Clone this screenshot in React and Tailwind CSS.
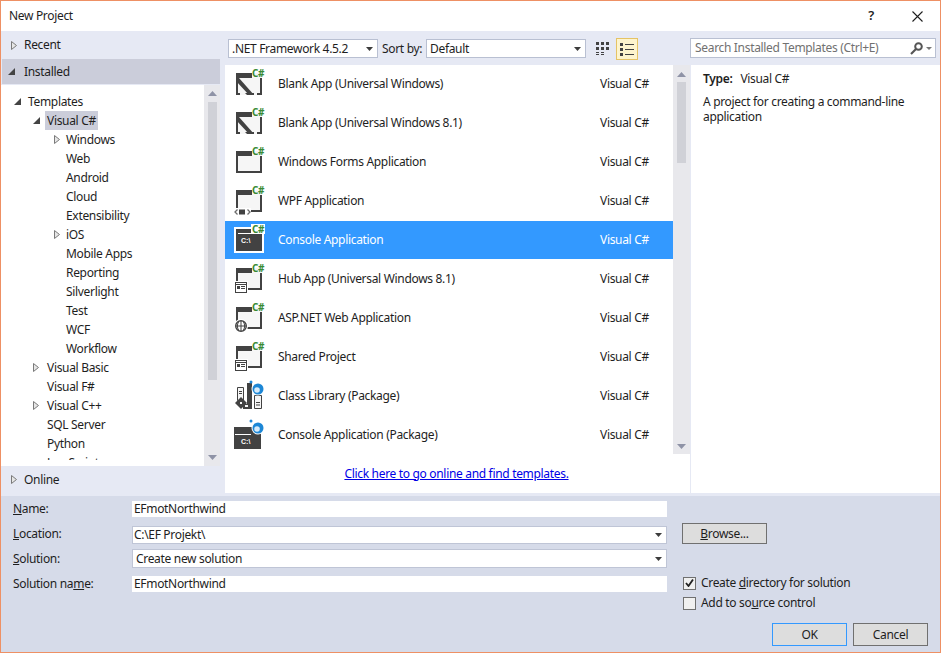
import React from 'react';

const D = '#424242';
const Win = () => (
  <>
    <rect x="2" y="5" width="26" height="22" fill="#f6f6f6" />
    <path d="M2 5h16v5H4v15H2z M2 25h26v2H2z M26 10h2v17h-2z" fill={D} />
  </>
);
const CS = ({ bg }) => (
  <>
    {bg && <rect x="17" y="0" width="14" height="10" fill={bg} />}
    <text x="18" y="9" fontSize="10" fontWeight="700" letterSpacing="-0.5" fontFamily="'Noto Sans', sans-serif" fill="#388a34">C#</text>
  </>
);
const Card = () => (
  <>
    <rect x="0" y="18" width="14" height="12" fill="#fff" />
    <rect x="1.500" y="19.500" width="11" height="10" fill="none" stroke={D} />
    <path d="M2 21.500h10" stroke={D} />
    <path d="M3 23h3v3H3z" fill={D} />
    <path d="M7 23.500h4M7 25.500h4" stroke={D} />
  </>
);
const Pack = () => (
  <>
    <circle cx="24" cy="9" r="6.500" fill="#fff" />
    <circle cx="24" cy="9" r="5.500" fill="#1d87d6" />
    <circle cx="23" cy="10" r="2.800" fill="#d6ebfb" />
    <circle cx="17" cy="2" r="1.500" fill="#1d87d6" />
  </>
);

function TemplateIcon({ kind }) {
  return (
    <svg width="32" height="32" viewBox="0 0 32 32" className="shrink-0 block self-start mt-[3px] overflow-visible">
      {kind === 'blank' && (
        <>
          <Win />
          <path d="M2 10h3l15 17h-5L2 13z" fill={D} />
          <path d="M6 25h5l2 2H6zM20 25h3v2h-3z" fill="#f6f6f6" />
          <CS />
        </>
      )}
      {kind === 'win' && (<><Win /><CS /></>)}
      {kind === 'wpf' && (
        <>
          <Win />
          <rect x="0" y="23" width="17" height="8" fill="#fff" />
          <path d="M3.500 24.500L1 27l2.500 2.500M13.500 24.500L16 27l-2.500 2.500" fill="none" stroke="#6d6d6d" strokeWidth="1.300" />
          <rect x="5" y="24.500" width="6" height="5" fill={D} />
          <CS />
        </>
      )}
      {kind === 'console' && (
        <>
          <rect x="0" y="3" width="30" height="26" fill="#fff" />
          <rect x="2" y="5" width="26" height="22" fill={D} />
          <path d="M4 9.500h14" stroke="#fff" />
          <text x="7" y="19" fontSize="7" letterSpacing="0" fontFamily="'Liberation Sans', sans-serif" fontWeight="700" fill="#fff">C:\</text>
          <CS bg="#fff" />
        </>
      )}
      {kind === 'hub' && (<><Win /><Card /><CS /></>)}
      {kind === 'asp' && (
        <>
          <Win />
          <circle cx="7" cy="24" r="7" fill="#fff" />
          <circle cx="7" cy="24" r="5.300" fill="none" stroke={D} strokeWidth="1.400" />
          <path d="M2 24h10M7 19v10M4.500 20c-1.500 2.500-1.500 5.500 0 8M9.500 20c1.500 2.500 1.500 5.500 0 8" fill="none" stroke={D} />
          <CS />
        </>
      )}
      {kind === 'lib' && (
        <>
          <path d="M3.500 7.500h6v13h-6z" fill="#f6f6f6" stroke={D} />
          <path d="M5 11.500h3M5 13.500h3" stroke={D} />
          <path d="M13 3h5v26h-5z" fill={D} />
          <path d="M20.500 15.500h7v13h-7z" fill="#f6f6f6" stroke={D} />
          <path d="M22 22.500h4M22 25h4" stroke={D} />
          <path d="M7 17l6 6-6 6-6-6z" fill={D} />
          <path d="M9 24h7v5H9z" fill={D} />
          <path d="M6 22h2v2H6zM11 25h3v2h-3z" fill="#f6f6f6" />
          <Pack />
        </>
      )}
      {kind === 'pconsole' && (
        <>
          <rect x="0" y="8" width="27" height="22" fill={D} />
          <path d="M1 15.500h16" stroke="#fff" />
          <text x="7" y="25" fontSize="7" letterSpacing="0" fontFamily="'Liberation Sans', sans-serif" fontWeight="700" fill="#fff">C:\</text>
          <Pack />
        </>
      )}
    </svg>
  );
}

const Collapsed = () => (
  <svg width="6" height="9" viewBox="0 0 6 9" className="block shrink-0">
    <path d="M.5.500v8L5.500 4.500z" fill="#e6e6e6" stroke="#7a7a7a" />
  </svg>
);
const Expanded = () => (
  <svg width="7" height="7" viewBox="0 0 7 7" className="block shrink-0">
    <path d="M7 0v7H0z" fill="#444" />
  </svg>
);
const Caret = () => (
  <svg width="7" height="4" viewBox="0 0 7 4" className="block shrink-0">
    <path d="M0 0h7L3.500 4z" fill="#3c3c3c" />
  </svg>
);
const ScrollArrow = ({ up }) => (
  <svg width="9" height="5" viewBox="0 0 9 5" className="block shrink-0">
    <path d={up ? 'M0 5h9L4.500 0z' : 'M0 0h9L4.500 5z'} fill="#8f93a6" />
  </svg>
);

const tree = [
  ['Templates', 'l0', 'e'],
  ['Visual C#', 'l1', 'e', true],
  ['Windows', 'l2', 'c'],
  ['Web', 'l2'],
  ['Android', 'l2'],
  ['Cloud', 'l2'],
  ['Extensibility', 'l2'],
  ['iOS', 'l2', 'c'],
  ['Mobile Apps', 'l2'],
  ['Reporting', 'l2'],
  ['Silverlight', 'l2'],
  ['Test', 'l2'],
  ['WCF', 'l2'],
  ['Workflow', 'l2'],
  ['Visual Basic', 'l1', 'c'],
  ['Visual F#', 'l1'],
  ['Visual C++', 'l1', 'c'],
  ['SQL Server', 'l1'],
  ['Python', 'l1'],
  ['JavaScript', 'l1'],
];

const templates = [
  ['Blank App (Universal Windows)', 'blank'],
  ['Blank App (Universal Windows 8.1)', 'blank'],
  ['Windows Forms Application', 'win'],
  ['WPF Application', 'wpf'],
  ['Console Application', 'console', true],
  ['Hub App (Universal Windows 8.1)', 'hub'],
  ['ASP.NET Web Application', 'asp'],
  ['Shared Project', 'hub'],
  ['Class Library (Package)', 'lib'],
  ['Console Application (Package)', 'pconsole'],
];

function TreeRow({ label, level, arrow, selected }) {
  const arrowPos = level === 'l0' ? 'w-[25px] pl-[13px]' : level === 'l1' ? 'w-[44px] pl-[32px]' : 'w-[63px] pl-[53px]';
  return (
    <div className="h-[19px] flex items-center">
      <div className={arrowPos + ' shrink-0 flex items-center'}>
        {arrow === 'e' && <Expanded />}
        {arrow === 'c' && <Collapsed />}
      </div>
      <span className={(selected ? 'bg-[#cbcdda] ' : '') + 'h-[19px] leading-[19px] px-[2px]'}>{label}</span>
    </div>
  );
}

const Select = ({ w, h = 'h-[19px]', label, border = 'border-[#b9c0d2]', pl = 'pl-[3px]' }) => (
  <div className={`${w} ${h} border ${border} ${pl} bg-white flex items-center justify-between pr-[4px] shrink-0`}>
    <span>{label}</span>
    <Caret />
  </div>
);

export default function App() {
  return (
    <div className="w-[941px] h-[653px] border border-[#ee9064] bg-white flex flex-col overflow-hidden text-[12px] text-[#1e1e1e] tracking-[-0.32px]" style={{ fontFamily: "'Noto Sans', sans-serif" }}>
      {/* title */}
      <div className="h-[30px] shrink-0 flex items-center justify-between pl-[8px] pr-[17px]">
        <span>New Project</span>
        <div className="flex items-center gap-[38px]">
          <span className="text-[13px] font-semibold">?</span>
          <svg width="11" height="11" viewBox="0 0 11 11"><path d="M.5.500l10 10M10.500.500l-10 10" stroke="#1e1e1e" strokeWidth="1.100" /></svg>
        </div>
      </div>

      {/* main */}
      <div className="h-[462px] shrink-0 bg-[#e6e9f4] flex">
        <div className="w-[219px] shrink-0 flex flex-col">
          <div className="h-[28px] flex items-center shrink-0 pl-[10px] gap-[9px]"><Collapsed /><span className="ml-[-2px]">Recent</span></div>
          <div className="h-[25px] flex items-center shrink-0 bg-[#cbcdda] pl-[6px] gap-[9px] ml-[1px]"><Expanded /><span>Installed</span></div>
          <div className="h-[381px] shrink-0 mt-[1px] bg-white flex overflow-hidden">
            <div className="flex-1 pt-[7px]">
              <div className="h-[368px] overflow-hidden">
                {tree.map((t) => <TreeRow key={t[0]} label={t[0]} level={t[1]} arrow={t[2]} selected={t[3]} />)}
              </div>
            </div>
            <div className="w-[16px] shrink-0 bg-[#e8e8ec] flex flex-col items-center pb-[6px] pt-[6px]">
              <ScrollArrow up />
              <div className="w-full flex-1 mt-[6px]"><div className="h-[278px] w-[9px] mx-auto bg-[#d0d1d7]" /></div>
              <ScrollArrow />
            </div>
          </div>
          <div className="flex-1 flex items-center pl-[10px] gap-[9px]"><Collapsed /><span className="ml-[-2px]">Online</span></div>
        </div>

        <div className="w-[465px] shrink-0 ml-[5px] flex flex-col">
          <div className="h-[34px] shrink-0 flex items-center pt-[1px]">
            <div className="ml-[3px] flex items-center">
              <Select w="w-[150px]" label=".NET Framework 4.5.2" />
              <span className="ml-[4px] w-[44px]">Sort by:</span>
              <Select w="w-[160px]" label="Default" />
              <svg width="14" height="14" viewBox="0 0 14 14" className="ml-[10px] shrink-0">
                <path d="M0 0h3v3H0zM5 0h3v3H5zM10 0h3v3h-3zM0 5h3v3H0zM5 5h3v3H5zM10 5h3v3h-3zM0 10h3v1H0zM0 12h3v1H0zM5 10h3v1H5zM5 12h3v1H5z" fill="#424242" />
              </svg>
              <div className="ml-[6px] w-[22px] h-[22px] shrink-0 bg-[#fdf4cd] border border-[#e5c365] flex items-center justify-center">
                <svg width="14" height="14" viewBox="0 0 14 14">
                  <path d="M0 1h3v3H0zM0 6h3v3H0zM0 11h3v3H0z" fill="#424242" />
                  <path d="M5 2.500h9M5 7.500h9M5 12.500h9" stroke="#424242" />
                </svg>
              </div>
            </div>
          </div>
          <div className="flex-1 bg-white flex flex-col min-h-0">
            <div className="h-[389px] shrink-0 flex overflow-hidden">
              <div className="flex-1">
                {templates.map(([name, kind, sel]) => (
                  <div key={name} className={(sel ? 'bg-[#3399ff] text-white border-white ' : 'border-transparent ') + 'h-[39px] border-b flex items-center pl-[9px]'}>
                    <TemplateIcon kind={kind} />
                    <span className="ml-[12px] w-[322px] shrink-0 pb-[1px]">{name}</span>
                    <span className="pb-[1px]">Visual C#</span>
                  </div>
                ))}
              </div>
              <div className="w-[17px] shrink-0 bg-[#e8e8ec] flex flex-col items-center pt-[7px] pb-[5px]">
                <ScrollArrow up />
                <div className="flex-1 w-full mt-[5px]"><div className="h-[81px] w-[9px] mx-auto bg-[#d0d1d7]" /></div>
                <ScrollArrow />
              </div>
            </div>
            <div className="flex-1 flex items-center justify-center pr-[2px]">
              <span className="text-[#0000e6] underline">Click here to go online and find templates.</span>
            </div>
          </div>
        </div>

        <div className="flex-1 min-w-0 flex flex-col ml-[1px]">
          <div className="h-[34px] shrink-0 pr-[4px] pt-[7px] ml-[-1px]">
            <div className="h-[20px] bg-white border border-[#b9c0d2] flex items-center justify-between pl-[4px] pr-[3px] text-[#717171]">
              <span>Search Installed Templates (Ctrl+E)</span>
              <div className="flex items-center gap-[3px]">
                <svg width="13" height="13" viewBox="0 0 13 13"><circle cx="8.500" cy="4.500" r="3.300" fill="none" stroke="#555" strokeWidth="2" /><path d="M6 7l-5 5" stroke="#555" strokeWidth="2.200" /></svg>
                <svg width="6" height="3" viewBox="0 0 6 3"><path d="M0 0h6L3 3z" fill="#777" /></svg>
              </div>
            </div>
          </div>
          <div className="flex-1 bg-white pl-[12px] pt-[5px]">
            <div className="h-[18px] leading-[18px]"><span className="font-semibold">Type:</span><span className="ml-[8px]">Visual C#</span></div>
            <div className="mt-[6px] leading-[15px] w-[220px]">A project for creating a command-line application</div>
          </div>
        </div>
      </div>

      {/* form */}
      <div className="flex-1 bg-[#d6dbe9] border-t-[3px] border-[#e6e9f4] flex flex-col pl-[12px]">
        <div className="flex pt-[5px]">
          <div className="w-[119px] shrink-0 flex flex-col">
            <div className="h-[25px] leading-[16px]"><u>N</u>ame:</div>
            <div className="h-[25px] leading-[16px]"><u>L</u>ocation:</div>
            <div className="h-[25px] leading-[16px]"><u>S</u>olution:</div>
            <div className="h-[25px] leading-[16px]">Solution na<u>m</u>e:</div>
          </div>
          <div className="w-[535px] shrink-0 flex flex-col">
            <div className="h-[25px]"><div className="h-[16px] bg-white pl-[2px] leading-[16px]">EFmotNorthwind</div></div>
            <div className="h-[25px]"><Select w="w-full" h="h-[18px]" pl="pl-[1px]" label="C:\EF Projekt\" border="border-[#bfc5d6]" /></div>
            <div className="h-[25px]"><div className="mt-[-2px]"><Select w="w-full" h="h-[19px]" label="Create new solution" border="border-[#bfc5d6]" /></div></div>
            <div className="h-[25px]"><div className="h-[16px] bg-white pl-[2px] leading-[16px]">EFmotNorthwind</div></div>
          </div>
          <div className="ml-[15px] flex flex-col">
            <div className="h-[22px]" />
            <div className="w-[85px] h-[21px] bg-[#dddddd] border border-[#707070] flex items-center justify-center leading-none"><span><u>B</u>rowse...</span></div>
            <div className="h-[29px]" />
            <div className="h-[20px] pl-[1px] flex items-center gap-[5px]">
              <span className="w-[13px] h-[13px] bg-[#f0f0f0] border border-[#707070] flex items-center justify-center">
                <svg width="9" height="8" viewBox="0 0 9 8"><path d="M1 4l2.500 3L8 .5" fill="none" stroke="#222" strokeWidth="1.800" /></svg>
              </span>
              <span>Create <u>d</u>irectory for solution</span>
            </div>
            <div className="h-[20px] pl-[1px] flex items-center gap-[5px]">
              <span className="w-[13px] h-[13px] bg-[#f0f0f0] border border-[#707070]" />
              <span>Add to so<u>u</u>rce control</span>
            </div>
          </div>
        </div>
        <div className="flex justify-end gap-[6px] pr-[12px] mt-[10px]">
          <div className="w-[75px] h-[23px] bg-[#dddddd] border border-[#3399ff] flex items-center justify-center">OK</div>
          <div className="w-[75px] h-[23px] bg-[#dddddd] border border-[#707070] flex items-center justify-center">Cancel</div>
        </div>
      </div>
    </div>
  );
}
